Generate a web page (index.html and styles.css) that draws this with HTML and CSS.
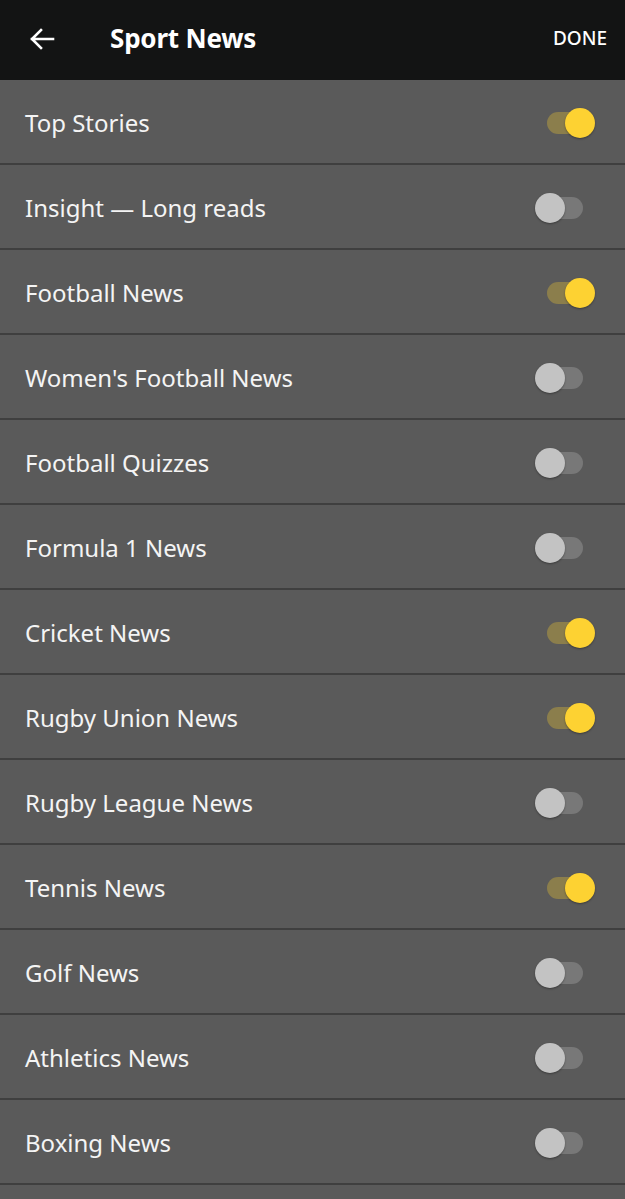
FILE: index.html
```html
<!DOCTYPE html>
<html>
<head>
<meta charset="utf-8">
<link rel="stylesheet" href="styles.css">
</head>
<body>
<header class="bar">
  <svg class="back" width="28" height="28" viewBox="0 0 28 28"><path d="M25 14H4M13 5l-9 9 9 9" fill="none" stroke="#fff" stroke-width="2.6" stroke-linecap="square"/></svg>
  <h1 class="title">Sport News</h1>
  <span class="done">DONE</span>
</header>
<ul class="list">
  <li class="row"><span class="label">Top Stories</span><span class="switch on"></span></li>
  <li class="row"><span class="label">Insight — Long reads</span><span class="switch"></span></li>
  <li class="row"><span class="label">Football News</span><span class="switch on"></span></li>
  <li class="row"><span class="label">Women's Football News</span><span class="switch"></span></li>
  <li class="row"><span class="label">Football Quizzes</span><span class="switch"></span></li>
  <li class="row"><span class="label">Formula 1 News</span><span class="switch"></span></li>
  <li class="row"><span class="label">Cricket News</span><span class="switch on"></span></li>
  <li class="row"><span class="label">Rugby Union News</span><span class="switch on"></span></li>
  <li class="row"><span class="label">Rugby League News</span><span class="switch"></span></li>
  <li class="row"><span class="label">Tennis News</span><span class="switch on"></span></li>
  <li class="row"><span class="label">Golf News</span><span class="switch"></span></li>
  <li class="row"><span class="label">Athletics News</span><span class="switch"></span></li>
  <li class="row"><span class="label">Boxing News</span><span class="switch"></span></li>
  <li class="row"></li>
</ul>
</body>
</html>
```
FILE: styles.css
```css
html, body {
  margin: 0;
  padding: 0;
  background: #5a5a5a;
  font-family: "Noto Sans", "Open Sans", sans-serif;
  overflow: hidden;
}
.bar {
  height: 80px;
  background: #131414;
  display: flex;
  align-items: center;
  padding: 0 18px 0 28px;
  box-sizing: border-box;
}
.back {
  display: block;
  margin-top: -2px;
}
.title {
  margin: -4px 0 0 54px;
  font-size: 26px;
  font-weight: 700;
  color: #fff;
  flex: 1;
  letter-spacing: -0.2px;
}
.done {
  color: #fff;
  font-size: 19px;
  font-weight: 500;
  margin-top: -4px;
  margin-left: -2px;
}
.list {
  list-style: none;
  margin: 0;
  padding: 0;
}
.row {
  height: 83px;
  border-bottom: 2px solid #3f3f3f;
  display: flex;
  align-items: center;
  justify-content: space-between;
  padding: 0 42px 0 25px;
  background: #5a5a5a;
}
.label {
  color: #f4f4f4;
  font-size: 24px;
  margin-top: 2px;
}
.switch {
  position: relative;
  width: 36px;
  height: 22px;
  border-radius: 11px;
  background: #787878;
  margin-top: 2px;
}
.switch::after {
  content: "";
  position: absolute;
  top: -4px;
  left: -12px;
  width: 30px;
  height: 30px;
  border-radius: 50%;
  background: #c3c3c3;
  box-shadow: 0 1px 2px rgba(0,0,0,0.35);
}
.switch.on {
  background: #8b7e4c;
}
.switch.on::after {
  left: 18px;
  background: #fdd232;
}
```
